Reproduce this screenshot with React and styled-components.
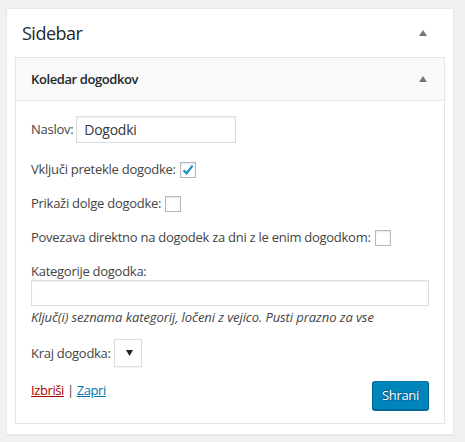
import styled, { createGlobalStyle } from "styled-components"

const Global = createGlobalStyle`
    html, body {
        margin: 0;
        background: #f1f1f1;
    }
    body {
        font-family: "Open Sans", "Noto Sans", sans-serif;
        font-size: 13px;
        letter-spacing: -0.27px;
        color: #444;
    }
`

const Page = styled.div`
    padding: 8px 11px 6px 6px;
`

const Panel = styled.div`
    background: #fff;
    box-shadow: 0 1px 1px rgba(0, 0, 0, .04);
    border: 1px solid #e9e9e9;
    padding: 0 8px 10px;
`

const PanelHead = styled.div`
    height: 48px;
    display: flex;
    align-items: center;
    justify-content: space-between;
    padding: 0 18px 0 7px;
`

const PanelTitle = styled.h2`
    margin: 0;
    font-size: 18px;
    font-weight: 400;
    color: #23282d;
    letter-spacing: -0.5px;
`

const Arrow = styled.span`
    width: 0;
    height: 0;
    border-left: 4px solid transparent;
    border-right: 4px solid transparent;
    border-bottom: 6px solid #72777c;
`

const Widget = styled.div`
    border: 1px solid #e5e5e5;
    background: #fff;
`

const WidgetHead = styled.div`
    height: 42px;
    background: #f9f9f9;
    border-bottom: 1px solid #e5e5e5;
    display: flex;
    align-items: center;
    justify-content: space-between;
    padding: 0 17px 0 15px;
`

const WidgetTitle = styled.h3`
    margin: 0;
    font-size: 13px;
    font-weight: 600;
    color: #23282d;
    letter-spacing: -0.4px;
`

const Body = styled.div`
    padding: 15px 15px 13px;
    display: flex;
    flex-direction: column;
`

const Row = styled.div`
    display: flex;
    align-items: center;
    gap: ${props => props.gap || 4}px;
    margin-top: ${props => props.top || 0}px;
    line-height: ${props => props.lh || 21}px;
`

const TextInput = styled.div`
    box-sizing: border-box;
    width: ${props => props.w || '100%'};
    height: ${props => props.h || 27}px;
    border: 1px solid #ddd;
    box-shadow: inset 0 1px 2px rgba(0, 0, 0, .07);
    background: #fff;
    font-size: 14px;
    color: #32373c;
    padding: 0 7px;
    display: flex;
    align-items: center;
`

const Check = styled.span`
    box-sizing: border-box;
    width: 16px;
    height: 16px;
    border: 1px solid #b4b9be;
    background: #fff;
    box-shadow: inset 0 1px 2px rgba(0, 0, 0, .1);
    display: inline-flex;
    align-items: center;
    justify-content: center;
`

const Hint = styled.div`
    font-style: italic;
    letter-spacing: -0.08px;
    line-height: 20px;
    margin-top: 1px;
`

const Select = styled.div`
    box-sizing: border-box;
    width: 28px;
    height: 28px;
    border: 1px solid #ddd;
    box-shadow: 0 1px 1px rgba(0, 0, 0, .04);
    background: #fff;
    display: flex;
    align-items: center;
    justify-content: flex-end;
    padding-right: 8px;
`

const Actions = styled.div`
    display: flex;
    justify-content: space-between;
    align-items: flex-start;
    margin-top: 14px;
`

const Links = styled.div`
    line-height: 18px;
    letter-spacing: -0.4px;
`

const Link = styled.a`
    color: ${props => props.danger ? '#a00' : '#0073aa'};
    text-decoration: underline;
`

const Button = styled.button`
    height: 29px;
    padding: 0 9px 2px;
    font-family: inherit;
    font-size: 13px;
    letter-spacing: -0.3px;
    color: #fff;
    background: #0085ba;
    border: 1px solid #0073aa;
    border-color: #0073aa #006799 #006799;
    border-radius: 3px;
    box-shadow: 0 1px 0 #006799;
    text-shadow: 0 -1px 1px #006799, 1px 0 1px #006799, 0 1px 1px #006799, -1px 0 1px #006799;
`

const CheckBox = ({ checked }) => (
    <Check>
        {checked && (
            <svg width="14" height="14" viewBox="0 0 14 14">
                <path d="M2.5 7.2 L5.6 10.3 L11.6 2.6" fill="none" stroke="#1e8cbe" strokeWidth="2.2" strokeLinejoin="miter" />
            </svg>
        )}
    </Check>
)

const App = () => {
    return (
        <Page>
            <Global />
            <Panel>
                <PanelHead>
                    <PanelTitle>Sidebar</PanelTitle>
                    <Arrow />
                </PanelHead>
                <Widget>
                    <WidgetHead>
                        <WidgetTitle>Koledar dogodkov</WidgetTitle>
                        <Arrow />
                    </WidgetHead>
                    <Body>
                        <Row gap={3}>
                            Naslov:
                            <TextInput w="160px">Dogodki</TextInput>
                        </Row>
                        <Row top={16}>
                            Vključi pretekle dogodke:
                            <CheckBox checked />
                        </Row>
                        <Row top={13}>
                            Prikaži dolge dogodke:
                            <CheckBox />
                        </Row>
                        <Row top={13}>
                            Povezava direktno na dogodek za dni z le enim dogodkom:
                            <CheckBox />
                        </Row>
                        <Row top={14} lh={18}>Kategorije dogodka:</Row>
                        <TextInput h={26} />
                        <Hint>Ključ(i) seznama kategorij, ločeni z vejico. Pusti prazno za vse</Hint>
                        <Row top={12} gap={3}>
                            Kraj dogodka:
                            <Select>
                                <svg width="7" height="6" viewBox="0 0 7 6">
                                    <path d="M0 0 H7 L3.5 6 Z" fill="#222" />
                                </svg>
                            </Select>
                        </Row>
                        <Actions>
                            <Links>
                                <Link danger href="#">Izbriši</Link> | <Link href="#">Zapri</Link>
                            </Links>
                            <Button>Shrani</Button>
                        </Actions>
                    </Body>
                </Widget>
            </Panel>
        </Page>
    )
}

export default App
